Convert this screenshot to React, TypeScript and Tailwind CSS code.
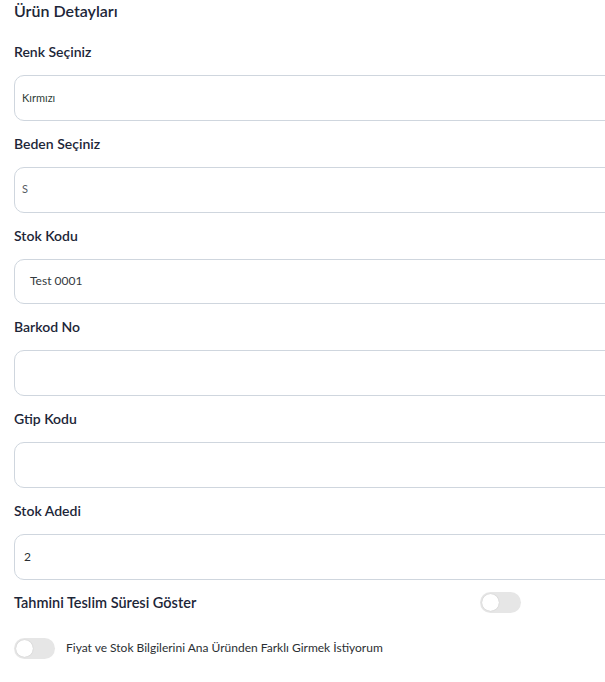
import React from "react";

const font = { fontFamily: "Lato, 'Noto Sans', sans-serif" };

function Field({
  label,
  value,
  textClass,
  first,
}: {
  label: string;
  value?: string;
  textClass?: string;
  first?: boolean;
}) {
  return (
    <div className={first ? "flex flex-col mt-[20px]" : "flex flex-col mt-[13px]"}>
      <div className="h-[20px] leading-[20px] text-[14px] font-semibold text-[#1d2638]">
        {label}
      </div>
      <div className="mt-[13px] h-[45.8px] w-[640px] rounded-[10px] border border-[#cfd6de] bg-white flex items-center">
        {value ? <span className={textClass}>{value}</span> : null}
      </div>
    </div>
  );
}

function Toggle() {
  return (
    <div className="h-[21px] w-[41px] rounded-full bg-[#e6e6e6] flex items-center px-[2px] shrink-0">
      <div className="h-[17px] w-[17px] rounded-full bg-white shadow-[0_0_1px_rgba(0,0,0,0.25)]" />
    </div>
  );
}

export default function App() {
  return (
    <div className="w-[605px] h-[682px] overflow-hidden bg-white" style={font}>
      <div className="pl-[14px] flex flex-col">
        <div className="h-[22px] leading-[22px] text-[16px] font-semibold text-[#1d2638]">
          Ürün Detayları
        </div>
        <Field
          first
          label="Renk Seçiniz"
          value="Kırmızı"
          textClass="pl-[7px] text-[11px] text-[#2f4038]"
        />
        <Field
          label="Beden Seçiniz"
          value="S"
          textClass="pl-[7px] text-[11px] text-[#555b62]"
        />
        <Field
          label="Stok Kodu"
          value="Test 0001"
          textClass="pl-[15px] text-[12px] text-[#333a40]"
        />
        <Field label="Barkod No" />
        <Field label="Gtip Kodu" />
        <Field
          label="Stok Adedi"
          value="2"
          textClass="pl-[9px] text-[12px] text-[#2b2f33]"
        />
        <div className="mt-[12px] w-[507px] flex items-center justify-between">
          <span className="text-[14.5px] font-semibold text-[#1d2638] leading-[21px]">
            Tahmini Teslim Süresi Göster
          </span>
          <Toggle />
        </div>
        <div className="mt-[25px] flex items-center gap-[11px]">
          <Toggle />
          <span className="text-[12px] text-[#2b2f33]">
            Fiyat ve Stok Bilgilerini Ana Üründen Farklı Girmek İstiyorum
          </span>
        </div>
      </div>
    </div>
  );
}
